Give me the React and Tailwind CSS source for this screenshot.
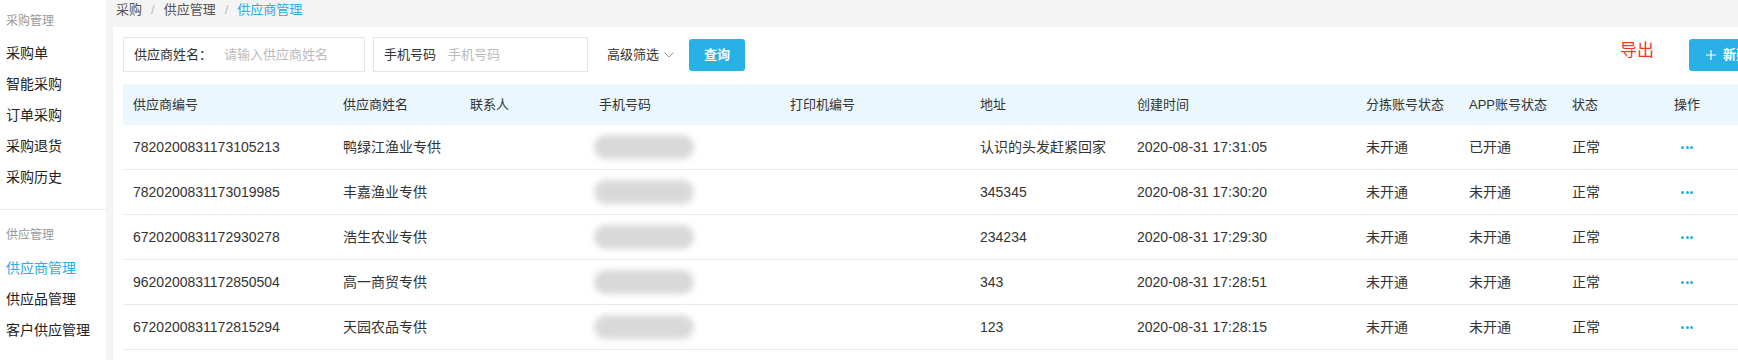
import React from "react";

// 表格列宽 (col 宽度按截图量出来的)
const columns = [
  { title: "供应商编号", w: "w-[210px]" },
  { title: "供应商姓名", w: "w-[127px]" },
  { title: "联系人", w: "w-[129px]" },
  { title: "手机号码", w: "w-[191px]" },
  { title: "打印机编号", w: "w-[190px]" },
  { title: "地址", w: "w-[157px]" },
  { title: "创建时间", w: "w-[229px]" },
  { title: "分拣账号状态", w: "w-[103px]" },
  { title: "APP账号状态", w: "w-[103px]" },
  { title: "状态", w: "w-[102px]" },
  { title: "操作", w: "w-[109px]" },
];

const rows = [
  { id: "7820200831173105213", name: "鸭绿江渔业专供", addr: "认识的头发赶紧回家", time: "2020-08-31 17:31:05", sort: "未开通", app: "已开通", status: "正常" },
  { id: "7820200831173019985", name: "丰嘉渔业专供", addr: "345345", time: "2020-08-31 17:30:20", sort: "未开通", app: "未开通", status: "正常" },
  { id: "6720200831172930278", name: "浩生农业专供", addr: "234234", time: "2020-08-31 17:29:30", sort: "未开通", app: "未开通", status: "正常" },
  { id: "9620200831172850504", name: "高一商贸专供", addr: "343", time: "2020-08-31 17:28:51", sort: "未开通", app: "未开通", status: "正常" },
  { id: "6720200831172815294", name: "天园农品专供", addr: "123", time: "2020-08-31 17:28:15", sort: "未开通", app: "未开通", status: "正常" },
];

const menu = [
  { group: "采购管理", items: ["采购单", "智能采购", "订单采购", "采购退货", "采购历史"] },
  { group: "供应管理", items: ["供应商管理", "供应品管理", "客户供应管理"] },
];

function Sidebar() {
  return (
    <aside className="w-[106px] shrink-0 bg-white">
      <div className="pb-[16px] border-b border-[#e8e8e8]">
        <div className="mt-[7px] mb-[3px] h-[28px] leading-[28px] pl-[6px] text-[12px] text-[#999]">{menu[0].group}</div>
        {menu[0].items.map((it) => (
          <div key={it} className="h-[31px] leading-[31px] pl-[6px] text-[14px] text-[#222]">{it}</div>
        ))}
      </div>
      <div>
        <div className="mt-[11px] mb-[4px] h-[28px] leading-[28px] pl-[6px] text-[12px] text-[#999]">{menu[1].group}</div>
        {menu[1].items.map((it) => (
          <div
            key={it}
            className={it === "供应商管理" ? "h-[31px] leading-[31px] pl-[6px] text-[14px] text-[#29aee6]" : "h-[31px] leading-[31px] pl-[6px] text-[14px] text-[#222]"}
          >
            {it}
          </div>
        ))}
      </div>
    </aside>
  );
}

function Blob() {
  return <div className="ml-[5px] h-[24px] w-[100px] rounded-full bg-[#d9d9d9] blur-[3px]" />;
}

function Dots() {
  return (
    <div className="flex gap-[1.5px] ml-[7px]">
      <span className="w-[3px] h-[3px] rounded-full bg-[#29aee6]" />
      <span className="w-[3px] h-[3px] rounded-full bg-[#29aee6]" />
      <span className="w-[3px] h-[3px] rounded-full bg-[#29aee6]" />
    </div>
  );
}

export default function App() {
  return (
    <div className="flex w-full h-screen overflow-hidden bg-[#f4f4f4] font-['Liberation_Sans','Noto_Sans_CJK_SC',sans-serif]">
      <Sidebar />

      <div className="flex flex-col shrink-0">
        {/* 面包屑 */}
        <div className="h-[27px] pl-[10px] pt-[1px] leading-[18px] text-[13px] text-[#555] flex items-start">
          <span>采购</span>
          <span className="mx-[9px] text-[#bbb]">/</span>
          <span>供应管理</span>
          <span className="mx-[9px] text-[#bbb]">/</span>
          <span className="text-[#29aee6]">供应商管理</span>
        </div>

        <div className="ml-[7px] flex-1 bg-white pl-[10px] pr-[10px] pt-[10px]">
          {/* 筛选栏 */}
          <div className="w-[1650px] flex items-center justify-between">
            <div className="flex items-center">
              <div className="w-[242px] h-[35px] border border-[#e5e5e5] flex items-center pl-[10px] text-[13px]">
                <span className="text-[#333]">供应商姓名：</span>
                <span className="ml-[12px] text-[#bbb]">请输入供应商姓名</span>
              </div>
              <div className="ml-[8px] w-[215px] h-[35px] border border-[#e5e5e5] flex items-center pl-[10px] text-[13px]">
                <span className="text-[#333]">手机号码</span>
                <span className="ml-[12px] text-[#bbb]">手机号码</span>
              </div>
              <div className="ml-[19px] flex items-center text-[13px] text-[#333]">
                <span>高级筛选</span>
                <svg width="10" height="6" viewBox="0 0 10 6" className="ml-[5px]">
                  <polyline points="0.5,0.5 5,5 9.5,0.5" fill="none" stroke="#999" strokeWidth="1" />
                </svg>
              </div>
              <button className="ml-[15px] w-[56px] h-[32px] rounded-[3px] bg-[#29b0e6] text-white text-[13px] font-bold">查询</button>
            </div>

            <div className="flex items-center">
              <span className="self-start mt-[1px] text-[17px] leading-[22px] text-[#f5371f]">导出</span>
              <button className="ml-[35px] w-[84px] h-[32px] rounded-[3px] bg-[#29b0e6] text-white text-[13px] font-bold flex items-center pl-[17px]">
                <svg width="10" height="10" viewBox="0 0 10 10">
                  <path d="M5 0v10M0 5h10" stroke="#fff" strokeWidth="1.2" />
                </svg>
                <span className="ml-[7px]">新建</span>
              </button>
            </div>
          </div>

          {/* 表格 */}
          <div className="w-[1650px] mt-[12px]">
            <div className="flex h-[41px] items-center bg-[#eaf7fd] text-[13px] text-[#333]">
              {columns.map((c) => (
                <div key={c.title} className={`${c.w} shrink-0 pl-[10px]`}>{c.title}</div>
              ))}
            </div>
            {rows.map((r) => (
              <div key={r.id} className="flex h-[45px] items-center border-b border-[#e9e9ef] text-[14px] text-[#333]">
                <div className="w-[210px] shrink-0 pl-[10px]">{r.id}</div>
                <div className="w-[127px] shrink-0 pl-[10px]">{r.name}</div>
                <div className="w-[129px] shrink-0 pl-[10px]"></div>
                <div className="w-[191px] shrink-0"><Blob /></div>
                <div className="w-[190px] shrink-0 pl-[10px]"></div>
                <div className="w-[157px] shrink-0 pl-[10px]">{r.addr}</div>
                <div className="w-[229px] shrink-0 pl-[10px]">{r.time}</div>
                <div className="w-[103px] shrink-0 pl-[10px]">{r.sort}</div>
                <div className="w-[103px] shrink-0 pl-[10px]">{r.app}</div>
                <div className="w-[102px] shrink-0 pl-[10px]">{r.status}</div>
                <div className="w-[109px] shrink-0 pl-[10px]"><Dots /></div>
              </div>
            ))}
          </div>
        </div>
      </div>
    </div>
  );
}
